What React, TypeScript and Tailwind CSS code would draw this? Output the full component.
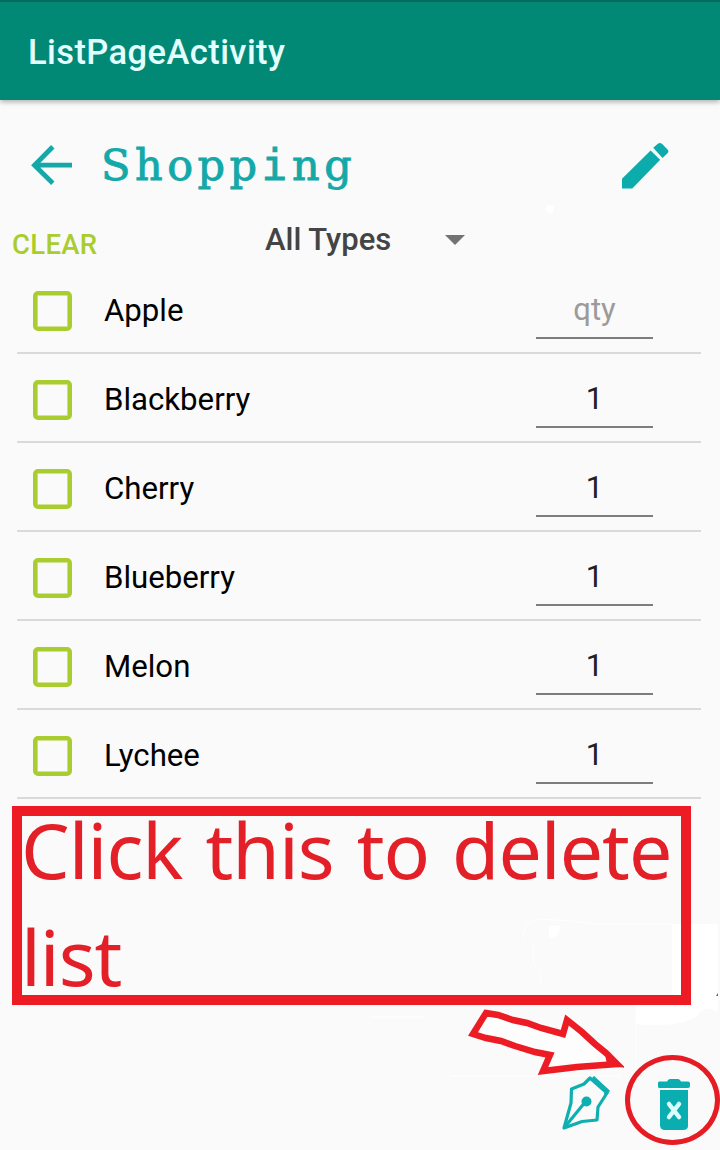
import React from "react";

const items = [
  { name: "Apple", qty: "" },
  { name: "Blackberry", qty: "1" },
  { name: "Cherry", qty: "1" },
  { name: "Blueberry", qty: "1" },
  { name: "Melon", qty: "1" },
  { name: "Lychee", qty: "1" },
];

function ItemRow({ name, qty }: { name: string; qty: string }) {
  return (
    <li className="flex h-[89px] items-start border-b-2 border-[#dadada] pl-[15.5px]">
      <span className="mt-[26px] size-[39.5px] shrink-0 rounded-[5px] border-4 border-[#a9cd2f] shadow-[inset_0_0_0_0.6px_#a9cd2f]" />
      <span className="ml-8 mt-[26px] w-[432px] text-[31.2px] leading-10 text-black">{name}</span>
      <span
        className={`h-[74px] w-[117px] border-b-2 border-[#7d7d7d] pt-[25px] text-center text-[31px] leading-10 ${
          qty ? "text-[#212121]" : "text-[#9b9b9b]"
        }`}
      >
        {qty || "qty"}
      </span>
    </li>
  );
}

function BackArrow() {
  return (
    <svg className="h-[42px] w-[42px]" viewBox="0 0 42 42" fill="none" stroke="#14a9a8" strokeWidth="4.8">
      <path d="M41 20.2H5M21.8 1.7 3.5 20.2l18.3 18.1" />
    </svg>
  );
}

function Pencil() {
  return (
    <svg className="h-[47px] w-[47px]" viewBox="0 0 47 47" fill="#0cacad">
      <path d="M0 35.8 28.6 7.4l9.6 9.4L10.3 45.5H0z" />
      <path d="m31.2 4.8 4.7-4q2-1.6 4 0l5.6 5.6q1.9 2 0 3.8l-5 4.8z" />
    </svg>
  );
}

function FountainPen() {
  return (
    <svg className="h-[56px] w-[50px]" viewBox="0 0 50 56" fill="none" stroke="#0eafb0" strokeWidth="3.2">
      <path d="M29 2 23 8 10.5 13 10 27 3 52 21 45.5 36 44 37 31 46 17Z" strokeLinejoin="round" />
      <path d="m32 1 15 14-3 4" strokeWidth="3" />
      <path d="M3 52 25 25" strokeWidth="3.2" />
      <circle cx="25.5" cy="25.5" r="5" fill="#0eafb0" stroke="none" />
    </svg>
  );
}

function Trash() {
  return (
    <svg className="h-[54px] w-[34px]" viewBox="0 0 34 54" fill="#0aaeb0">
      <path d="M2 3.5h8q1-2.5 3-2.5h8q2 0 3 2.5h7q2 0 2 2V8q0 2-2 2H2q-1 0-1-2V5.500q0-2 1-2z" />
      <path d="M3 12h28v36q0 4-5 4H8q-5 0-5-5z" />
      <path d="m12 26 10 13m0-13-10 13" stroke="#dcffff" strokeWidth="4.5" strokeLinecap="round" />
    </svg>
  );
}

export default function App() {
  return (
    <div className="relative flex h-[1150px] w-[720px] flex-col overflow-hidden bg-[#fafafa] font-['Roboto',sans-serif]">
      <header className="flex h-[100px] shrink-0 items-center border-t-2 border-[#066b5c] bg-[#028976] pl-7 shadow-[0_2px_5px_rgba(0,0,0,0.3)]">
        <h1 className="pt-[2px] text-[34.5px] font-medium leading-10 tracking-[0.42px] text-[#e4ffff]">ListPageActivity</h1>
      </header>

      <section className="flex h-[112px] shrink-0 items-start pl-[31px] pr-[51px] pt-[43px]">
        <div className="mt-[2px]"><BackArrow /></div>
        <h2 className="ml-7 -mt-[2px] whitespace-nowrap font-['DejaVu_Serif',serif] text-[43px] leading-[48px] tracking-[4.5px] text-[#14a9a8] [-webkit-text-stroke:0.9px_#14a9a8]">
          Shopp<span className="font-['DejaVu_Sans_Mono',monospace]">i</span>ng
        </h2>
        <button className="ml-auto" aria-label="Edit"><Pencil /></button>
      </section>

      <div className="flex h-[53px] shrink-0 items-start pl-3">
        <button className="mt-[13px] w-[253px] text-left text-[27.5px] font-medium leading-10 tracking-[0.3px] text-[#a9cd2f]">
          CLEAR
        </button>
        <button className="mt-[8px] flex items-center text-[31px] leading-10 text-[#444444]">
          <span className="w-[180px] text-left font-medium">All Types</span>
          <svg className="h-[10px] w-[20px]" viewBox="0 0 20 10" fill="#737373">
            <path d="M0 0h20L10 10z" />
          </svg>
        </button>
      </div>

      <ul className="ml-[17px] w-[684px]">
        {items.map((item) => (
          <ItemRow key={item.name} name={item.name} qty={item.qty} />
        ))}
      </ul>

      <svg className="absolute left-0 top-0 h-[1150px] w-[720px]" viewBox="0 0 720 1150" fill="white">
        <circle cx="550" cy="209" r="4" />
        <path d="M672 924h46v88q-16-8-20 4-20 12-62 8v-22h36z" />
        <path d="M549 926h11q0 10-8 12h-3z" />
        <path d="M523 939q0-18 16-20l34 2 23 3h76M533 945v18l7 6 1 15" fill="none" stroke="white" />
        <path d="M370 1017h54M450 1076h170v2M636 1010v68" fill="none" stroke="white" strokeWidth="1" />
        <path d="m716 996 2-3v3z" fill="#d72a32" />
      </svg>

      <div className="absolute left-3 top-[806px] h-[199px] w-[679px] border-[10px] border-[#ed1c24]">
        <p className="-ml-[1px] -mt-[20px] whitespace-nowrap font-['Noto_Sans',sans-serif] text-[77px] leading-[107px] tracking-[-1px] text-[#e32028] [word-spacing:4px]">
          Click this to delete
          <br />
          list
        </p>
      </div>

      <svg
        className="absolute left-[465px] top-[1005px] h-[73px] w-[165px]"
        viewBox="0 0 165 73"
        fill="#fdfdfd"
        stroke="#ed1c24"
        strokeWidth="6.5"
      >
        <path d="M21 8 33 10 48 15 62 18 76 23 98 29 102 15 117 27 130 39 141 48 152 59 112 62 78 66 85 50 70 47 50 41 36 36 21 33 8 29Z" />
        <path d="m141 52 18 10-16-1z" fill="#ed1c24" strokeWidth="1" />
      </svg>

      <div className="absolute left-[561px] top-[1076px]"><FountainPen /></div>
      <div className="absolute left-[657px] top-[1078px]"><Trash /></div>
      <div className="absolute left-[625px] top-[1055px] h-[90px] w-[95px] rounded-[50%] border-[5px] border-[#e61c24]" />
    </div>
  );
}
